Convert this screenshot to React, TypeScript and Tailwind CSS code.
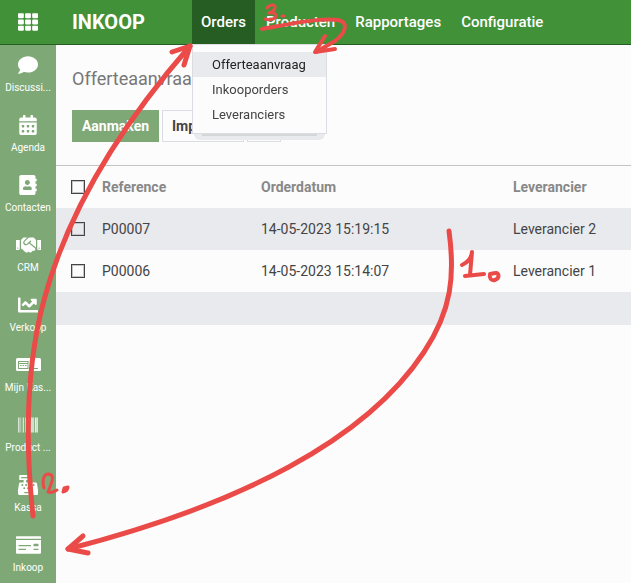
import type { ReactNode } from 'react'
import { FaComment, FaCalendarAlt, FaAddressBook, FaHandshake, FaChartLine, FaBarcode, FaCashRegister, FaMoneyCheck, FaTh } from 'react-icons/fa'

const MENU = ['Orders', 'Producten', 'Rapportages', 'Configuratie']
const ORDER_LINKS = ['Offerteaanvraag', 'Inkooporders', 'Leveranciers']

const ROWS = [
  { ref: 'P00007', date: '14-05-2023 15:19:15', vendor: 'Leverancier 2' },
  { ref: 'P00006', date: '14-05-2023 15:14:07', vendor: 'Leverancier 1' },
]

function KasbonIcon() {
  return (
    <svg viewBox="0 0 25 20" className="h-5 w-[25px]">
      <rect y="3" width="25" height="13" rx="1.5" fill="currentColor" />
      <g stroke="#7ea977" fill="none">
        <path d="M2 6.5H12.5M3 8.5H12M2.5 6V13M12 6V13M2 13.5H12.5M17 13.5H22" />
        <path strokeDasharray="1.5 1" d="M4 10.5H11" />
      </g>
    </svg>
  )
}

const APPS: { label: string; icon: ReactNode }[] = [
  { label: 'Discussi...', icon: <FaComment className="size-5" /> },
  { label: 'Agenda', icon: <FaCalendarAlt className="size-5" /> },
  { label: 'Contacten', icon: <FaAddressBook className="size-5" /> },
  { label: 'CRM', icon: <FaHandshake className="h-5 w-[25px]" /> },
  { label: 'Verkoop', icon: <FaChartLine className="size-5" /> },
  { label: 'Mijn Kas...', icon: <KasbonIcon /> },
  { label: 'Product ...', icon: <FaBarcode className="size-5" /> },
  { label: 'Kassa', icon: <FaCashRegister className="size-5" /> },
  { label: 'Inkoop', icon: <FaMoneyCheck className="h-5 w-[25px]" /> },
]

function Checkbox({ label }: { label: string }) {
  return (
    <input
      type="checkbox"
      aria-label={label}
      className="block size-[14px] appearance-none border border-[#444] bg-transparent shadow-[inset_0_0_0_1px_#c4c4c6] checked:bg-[#7ea977]"
    />
  )
}

function OrdersMenu() {
  return (
    <div className="absolute left-0 top-full z-10 w-[135px]">
      <div className="flex flex-col border border-[#dcdde3] bg-[#fcfcfc] pb-[6px] pt-[7px] text-[13px] leading-[25px]">
        {ORDER_LINKS.map((link, i) => (
          <a key={link} href="#" className={`px-[19px] ${i === 0 ? 'bg-[#e9eaee] text-[#222]' : 'text-[#444]'}`}>
            {link}
          </a>
        ))}
      </div>
      {/* lower edge of the search pill behind the menu */}
      <div className="mx-0.5 h-[6px] rounded-b-full bg-[#e9eaee] px-2 mix-blend-multiply">
        <div className="h-0.5 bg-[#d3d7d5]" />
      </div>
    </div>
  )
}

function Annotations() {
  return (
    <svg
      viewBox="0 0 631 583"
      className="pointer-events-none absolute left-0 top-0 z-20 h-[583px] w-[631px]"
      fill="none"
      stroke="#eb4b48"
      strokeWidth="5"
      strokeLinecap="round"
      strokeLinejoin="round"
    >
      {/* 1 */}
      <path d="M449 231C455 275 452 310 424 352C366 440 240 505 68 549" />
      <path d="M83 536L68 549L88 553" />
      <path strokeWidth="4" d="M462 265Q471 261 472 252L470 275M465 276L484 274" />
      <path strokeWidth="4" d="M490 274C489 278 491 281 495 280C500 278 499 273 496 273C493 273 491 274 490 274" />
      {/* 2 */}
      <path d="M33 516C26 450 25 370 44 300C60 240 95 155 190 46" />
      <path d="M172 52L190 46L184 65" />
      <path strokeWidth="3" d="M44 488C42 481 43 474 49 474C55 475 52 482 48 492C51 493 54 492 57 490M63 492L64 488L68 487Q68 491 63 492" />
      {/* 3 */}
      <path strokeWidth="4" d="M262 29C290 24 317 18 338 20C350 23 345 33 335 41L316 52" />
      <path strokeWidth="4" d="M325 36L315 52L335 49" />
      <path strokeWidth="3" d="M267 8C270 4 276 4 275 8C274 11 271 12 269 13C275 12 278 15 275 18C272 20 268 20 265 19M282 16L284 16" />
    </svg>
  )
}

export default function App() {
  return (
    <div className="relative flex min-h-screen flex-col overflow-hidden bg-[#fcfcfc] font-[Roboto,sans-serif] text-[#444]">
      <header className="flex h-[45px] items-stretch border-b border-[#265d22] bg-[#419139] text-white">
        <button aria-label="Apps" className="flex w-14 items-center justify-center">
          <FaTh className="size-5" />
        </button>
        <h1 className="flex w-[136px] items-center pl-4 text-xl font-bold">INKOOP</h1>
        <nav className="flex gap-0.5">
          {MENU.map((item) => (
            <div key={item} className="relative flex">
              <button className={`px-[9px] text-[15px] font-medium ${item === 'Orders' ? 'bg-[#265d22]' : ''}`}>{item}</button>
              {item === 'Orders' && <OrdersMenu />}
            </div>
          ))}
        </nav>
      </header>

      <div className="flex flex-1">
        <aside className="flex w-14 shrink-0 flex-col bg-[#7ea977] text-white">
          {APPS.map((app) => (
            <a key={app.label} href="#" className="flex h-[60px] flex-col items-center gap-[5px] pt-[10px] text-[10px] leading-4">
              {app.icon}
              <span className="whitespace-nowrap">{app.label}</span>
            </a>
          ))}
        </aside>

        <main className="min-w-0 flex-1">
          <div className="h-[120px] px-4 pt-5">
            <h2 className="text-lg leading-7 text-[#777]">Offerteaanvraag</h2>
            <div className="mt-[17px] flex gap-[3px] text-sm font-bold">
              <button className="h-8 w-[87px] bg-[#7ea977] text-white">Aanmaken</button>
              <button className="h-8 w-[82px] overflow-hidden border border-[#dcdde3] pl-[9px] text-left">Importeren</button>
              <button aria-label="Exporteren" className="h-8 w-[34px] border border-[#dcdde3]" />
            </div>
          </div>
          <table className="w-full table-fixed border-t border-[#c4c4c6] text-left text-sm">
            <thead>
              <tr className="h-[42px] text-[#888]">
                <th className="w-[46px] pl-[15px]"><Checkbox label="Alles selecteren" /></th>
                <th className="w-[159px] font-bold">Reference</th>
                <th className="w-[252px] font-bold">Orderdatum</th>
                <th className="font-bold">Leverancier</th>
              </tr>
            </thead>
            <tbody>
              {ROWS.map((row) => (
                <tr key={row.ref} className="h-[42px] odd:bg-[#e9eaee]">
                  <td className="pl-[15px]"><Checkbox label={row.ref} /></td>
                  <td>{row.ref}</td>
                  <td>{row.date}</td>
                  <td className="whitespace-nowrap">{row.vendor}</td>
                </tr>
              ))}
              <tr className="h-[33px] bg-[#e9eaee]">
                <td colSpan={4} />
              </tr>
            </tbody>
          </table>
        </main>
      </div>
      <Annotations />
    </div>
  )
}
